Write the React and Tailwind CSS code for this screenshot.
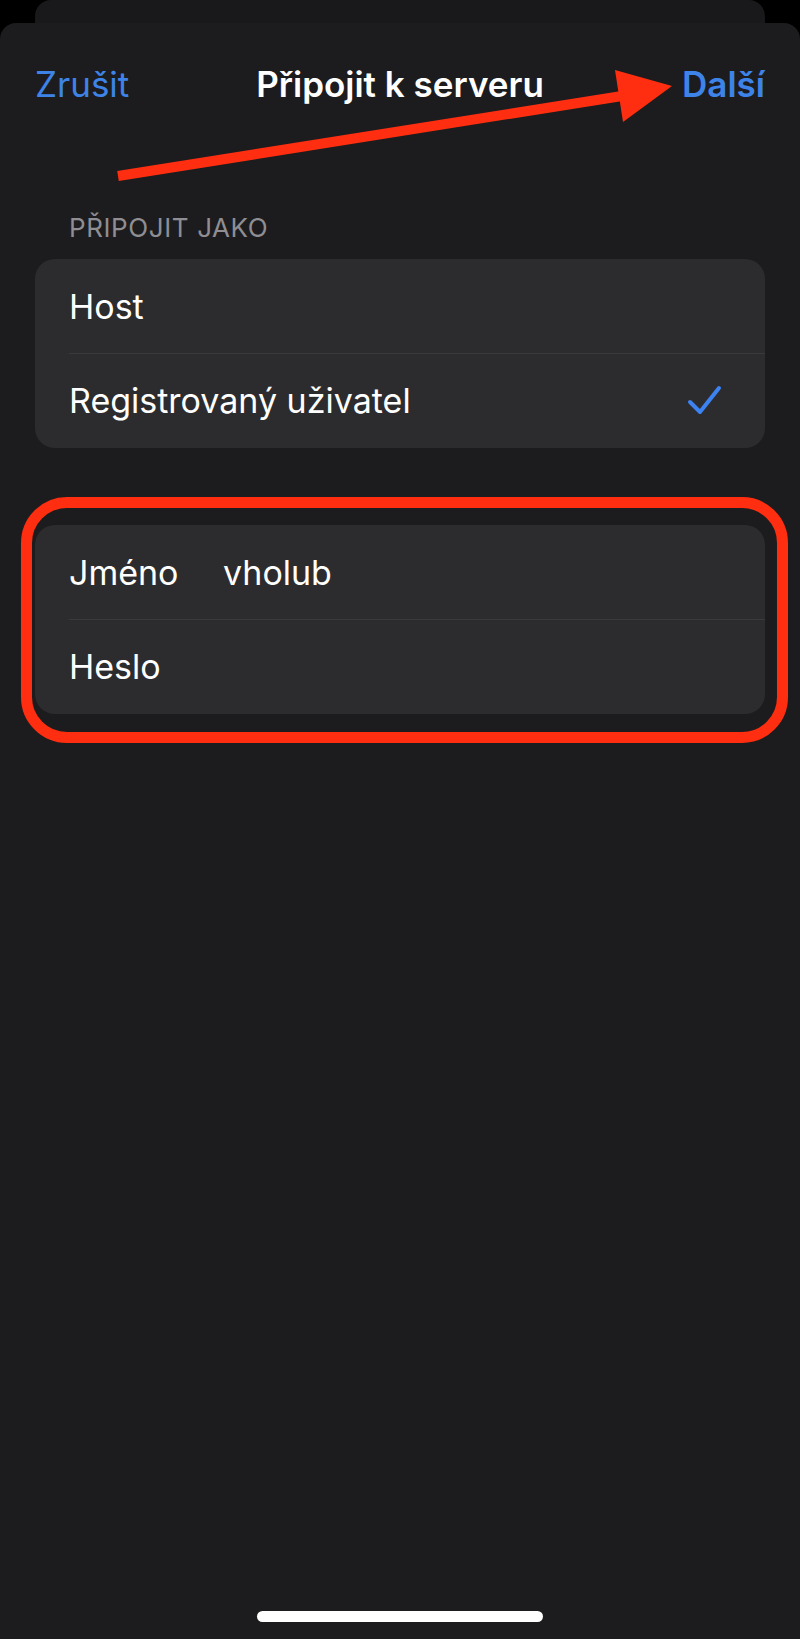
import React from "react";

const font = { fontFamily: "Inter, 'Noto Sans', 'Liberation Sans', sans-serif" };

function Row({ children, last }) {
  return (
    <div className="relative flex h-[94.5px] items-center pl-[34px] pr-[40px]">
      {children}
      {!last && <div className="absolute bottom-0 left-[34px] right-0 h-px bg-[#3a3a3d]" />}
    </div>
  );
}

export default function App() {
  return (
    <div style={font} className="relative flex h-[1639px] w-[800px] flex-col overflow-hidden bg-black text-white">
      {/* sheet behind */}
      <div className="mx-[35px] h-[23px] shrink-0 rounded-t-[16px] bg-[#19191b]" />

      {/* main sheet */}
      <div className="relative flex flex-1 flex-col rounded-t-[16px] bg-[#1c1c1e] px-[35px]">
        {/* nav */}
        <div className="mt-[35px] grid h-[47px] grid-cols-[1fr_auto_1fr] items-center text-[35px]">
          <span className="text-[#3e84e8]">Zrušit</span>
          <span className="font-semibold text-white">Připojit k serveru</span>
          <span className="text-right font-semibold text-[#3e84e8]">Další</span>
        </div>

        {/* section header */}
        <div className="mt-[110px] pl-[34px] text-[26px] uppercase leading-none tracking-[0.6px] text-[#8e8e93]">
          Připojit jako
        </div>

        {/* group 1 */}
        <div className="mt-[18px] rounded-[20px] bg-[#2c2c2e] text-[34px]">
          <Row>Host</Row>
          <Row last>
            <span className="flex-1">Registrovaný uživatel</span>
            <svg width="40" height="36" viewBox="0 0 40 36" fill="none">
              <path d="M5 19 L15 29 L34 5" stroke="#3c82f0" strokeWidth="4" strokeLinecap="round" strokeLinejoin="round" />
            </svg>
          </Row>
        </div>

        {/* group 2, marked */}
        <div className="relative mt-[77px]">
          <div className="pointer-events-none absolute -bottom-[29px] -left-[14px] -right-[23px] -top-[28px] rounded-[46px] border-[11px] border-[#ff2e10]" />
          <div className="rounded-[20px] bg-[#2c2c2e] text-[34px]">
            <Row>
              <span className="w-[154px]">Jméno</span>
              <span>vholub</span>
            </Row>
            <Row last>Heslo</Row>
          </div>
        </div>

        <div className="flex-1" />
        <div className="mb-[17px] flex justify-center">
          <div className="h-[11px] w-[286px] rounded-full bg-white" />
        </div>
      </div>

      {/* annotation arrow */}
      <svg className="pointer-events-none absolute left-0 top-0" width="800" height="200" viewBox="0 0 800 200">
        <path d="M118 176 L622 96" stroke="#ff2e10" strokeWidth="10" />
        <path d="M672 86 L615 70 L623 122 Z" fill="#ff2e10" />
      </svg>
    </div>
  );
}
